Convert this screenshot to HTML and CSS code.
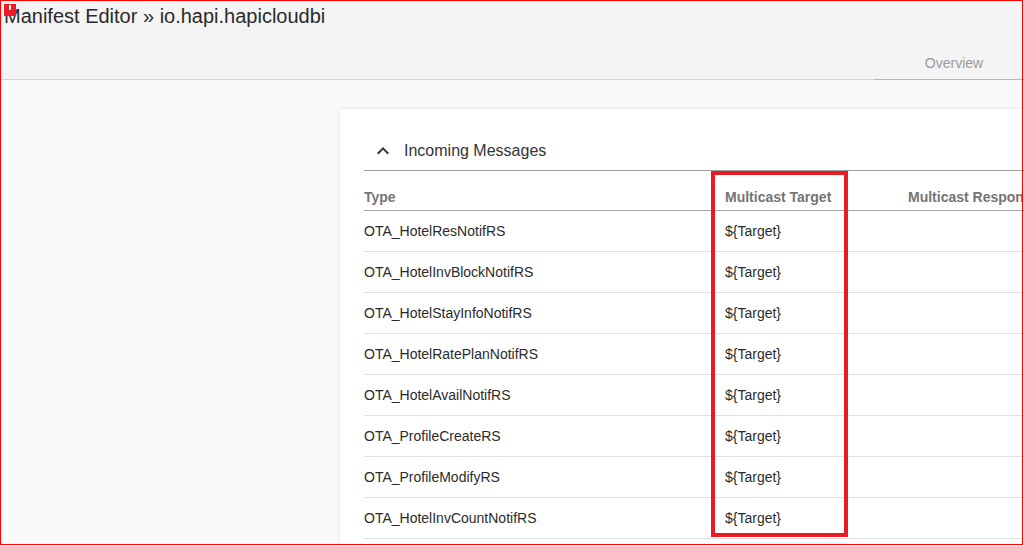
FILE: index.html
```html
<!DOCTYPE html>
<html>
<head>
<meta charset="utf-8">
<link rel="stylesheet" href="styles.css">
</head>
<body>
<div class="frame"></div>
<div class="badge"><span class="badge-mark"></span></div>
<header class="topbar">
  <h1 class="title">Manifest Editor » io.hapi.hapicloudbi</h1>
  <nav class="tabs">
    <div class="tab">Overview</div>
  </nav>
</header>
<main class="main">
  <section class="card">
    <div class="card-head">
      <svg class="chevron" viewBox="0 0 24 24" width="24" height="24"><path d="M12 8l-6 6 1.41 1.41L12 10.83l4.59 4.58L18 14z" fill="#333"/></svg>
      <span class="card-title">Incoming Messages</span>
    </div>
    <div class="table">
      <div class="highlight"></div>
      <div class="row head">
        <div class="cell">Type</div>
        <div class="cell">Multicast Target</div>
        <div class="cell">Multicast Response</div>
      </div>
      <div class="row"><div class="cell">OTA_HotelResNotifRS</div><div class="cell">${Target}</div><div class="cell"></div></div>
      <div class="row"><div class="cell">OTA_HotelInvBlockNotifRS</div><div class="cell">${Target}</div><div class="cell"></div></div>
      <div class="row"><div class="cell">OTA_HotelStayInfoNotifRS</div><div class="cell">${Target}</div><div class="cell"></div></div>
      <div class="row"><div class="cell">OTA_HotelRatePlanNotifRS</div><div class="cell">${Target}</div><div class="cell"></div></div>
      <div class="row"><div class="cell">OTA_HotelAvailNotifRS</div><div class="cell">${Target}</div><div class="cell"></div></div>
      <div class="row"><div class="cell">OTA_ProfileCreateRS</div><div class="cell">${Target}</div><div class="cell"></div></div>
      <div class="row"><div class="cell">OTA_ProfileModifyRS</div><div class="cell">${Target}</div><div class="cell"></div></div>
      <div class="row"><div class="cell">OTA_HotelInvCountNotifRS</div><div class="cell">${Target}</div><div class="cell"></div></div>
    </div>
  </section>
</main>
</body>
</html>
```

FILE: styles.css
```css
html, body {
  margin: 0;
  padding: 0;
  width: 1024px;
  height: 546px;
  overflow: hidden;
  background: #fafafa;
  font-family: "Liberation Sans", Arial, sans-serif;
}

.frame {
  position: absolute;
  left: 0;
  top: 0;
  width: 1021px;
  height: 543px;
  border: 1px solid #ff0000;
  z-index: 10;
  pointer-events: none;
}

.badge {
  position: absolute;
  left: 4px;
  top: 4px;
  width: 12px;
  height: 12px;
  background: #ec1c24;
  z-index: 11;
}

.badge-mark {
  position: absolute;
  left: 5px;
  top: 1px;
  width: 2px;
  height: 5px;
  background: #fff;
}

.topbar {
  height: 79px;
  background: #f4f4f4;
  border-bottom: 1px solid #d6d6d6;
  display: flex;
  flex-direction: column;
  justify-content: space-between;
}

.title {
  margin: 4px 0 0 0;
  padding: 0 4px;
  font-size: 20px;
  line-height: 24px;
  font-weight: normal;
  color: #2b2b2b;
}

.tabs {
  display: flex;
  justify-content: flex-end;
  margin-right: -10px;
  margin-bottom: -1px;
}

.tab {
  width: 160px;
  height: 32px;
  box-sizing: border-box;
  border-bottom: 1px solid #b9b9b9;
  display: flex;
  align-items: center;
  justify-content: center;
  font-size: 14px;
  color: #9a9a9a;
  padding-bottom: 1px;
}

.main {
  padding: 29px 0 0 340px;
}

.card {
  background: #fff;
  width: 720px;
  height: 460px;
  padding-left: 24px;
  box-shadow: 0 0 4px rgba(0, 0, 0, 0.10);
}

.card-head {
  height: 39px;
  padding-top: 22px;
  display: flex;
  align-items: center;
  border-bottom: 1px solid #9e9e9e;
}

.chevron {
  margin-left: 7px;
  margin-right: 9px;
}

.card-title {
  font-size: 16px;
  color: #333;
}

.table {
  position: relative;
}

.highlight {
  position: absolute;
  left: 347px;
  top: 0;
  width: 129px;
  height: 358px;
  border: 4px solid #e81c24;
  z-index: 5;
}

.row {
  display: grid;
  grid-template-columns: 361px 183px 1fr;
  height: 40px;
  align-items: center;
  border-bottom: 1px solid #e0e0e0;
  font-size: 14px;
  color: #2b2b2b;
}

.row.head {
  height: 39px;
  align-items: end;
  border-bottom-color: #a6a6a6;
  font-weight: bold;
  color: #757575;
}

.row.head .cell {
  padding-bottom: 5px;
}

.cell {
  white-space: nowrap;
}
```
